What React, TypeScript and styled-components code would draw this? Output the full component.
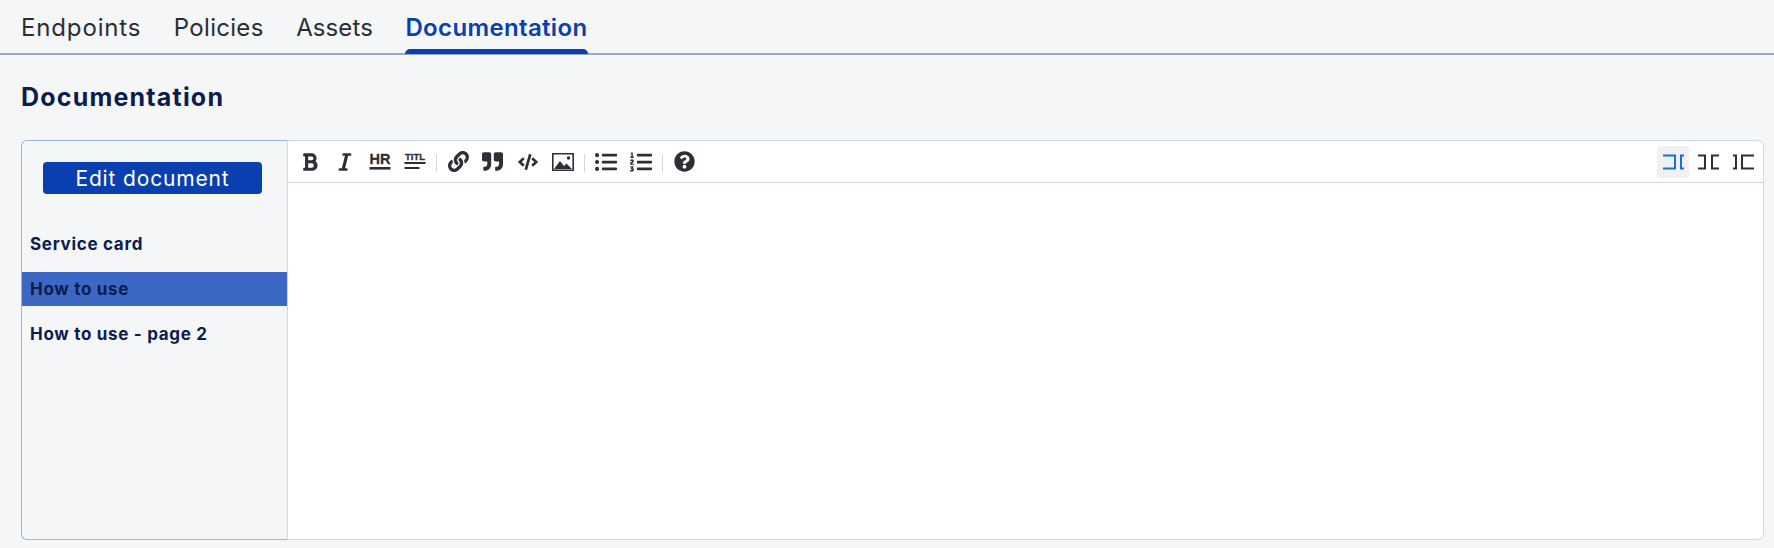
import React from "react";
import styled, { createGlobalStyle } from "styled-components";
import { FaBold, FaItalic, FaLink, FaQuoteRight, FaCode, FaListUl, FaListOl, FaQuestionCircle } from "react-icons/fa";

const Global = createGlobalStyle`
  html, body { margin: 0; padding: 0; background: #f4f6f8; }
  body { font-family: "Inter", "Liberation Sans", sans-serif; width: 1774px; height: 548px; overflow: hidden; }
`;
const Page = styled.div`display: flex; flex-direction: column; height: 548px;`;
const Tabs = styled.nav`
  display: flex; gap: 32.5px; height: 53px; padding-left: 21px;
  border-bottom: 2px solid #9ea7bf;
`;
const Tab = styled.div<{ $active?: boolean; $track: number }>`
  position: relative; font-size: 24px; line-height: 55px;
  letter-spacing: ${p => p.$track}px;
  font-weight: ${p => (p.$active ? 600 : 400)};
  color: ${p => (p.$active ? "#0a3fb0" : "#2b2d33")};
  ${p => p.$active && `&::after { content: ""; position: absolute; left: 0; right: 0; bottom: -1px; height: 5px; background: #0a3fb0; border-radius: 5px 5px 0 0; }`}
`;
const Main = styled.main`flex: 1; display: flex; flex-direction: column; padding: 0 10px 8px 21px;`;
const Heading = styled.h1`
  margin: 24px 0 25px; font-size: 25px; line-height: 36px; font-weight: 700; color: #0b1c4d; letter-spacing: 1.2px;
`;
const Card = styled.section`display: flex; height: 400px; box-sizing: border-box;`;
const Side = styled.aside`
  width: 266px; box-sizing: border-box; border: 1px solid #9cb4e4; border-right: 0; border-radius: 6px 0 0 6px;
  display: flex; flex-direction: column;
`;
const EditBtn = styled.button`
  width: 219px; height: 32px; margin: 21px 0 33px 21px; border: 0; border-radius: 4px; background: #0a3fb0; color: #fff;
  font: 400 21px "Inter", sans-serif; letter-spacing: 0.85px; padding: 0;
`;
const Item = styled.div<{ $active?: boolean }>`
  height: 34px; margin-bottom: 11px; padding-left: 8px; line-height: 34px; font-size: 17px; font-weight: 700; letter-spacing: 0.7px; color: #0b1c4d;
  background: ${p => (p.$active ? "#3c67c4" : "transparent")};
`;
const Editor = styled.div`
  flex: 1; background: #fff; border: 1px solid #ced8e6; border-radius: 0 6px 6px 0; display: flex; flex-direction: column;
`;
const Toolbar = styled.div`
  height: 42px; box-sizing: border-box; border-bottom: 1px solid #ced8e6; display: flex; align-items: center; padding: 0 1px 0 6px; color: #2c3036;
`;
const Tool = styled.span<{ $active?: boolean }>`
  width: 32px; height: 32px; margin-right: 2.9px; display: flex; align-items: center; justify-content: center; border-radius: 3px; flex: none;
  background: ${p => (p.$active ? "#eff1f4" : "transparent")};
  color: ${p => (p.$active ? "#1a6fdc" : "inherit")};
  svg { display: block; overflow: visible; }
`;
const Sep = styled.i`width: 1px; height: 18px; background: #d2d8e0; margin: 3px 5.5px 0 2px; flex: none;`;
const Spacer = styled.div`flex: 1;`;

const Split = ({ variant }: { variant: number }) => (
  <svg width="21" height="16" viewBox="0 0 21 16" fill="none" stroke="currentColor" strokeWidth="2">
    {variant === 0 && <><path d="M0 1.5h12v13H0" /><path d="M21 1.5h-3v13h3" /></>}
    {variant === 1 && <><path d="M0 1.5h7v13H0" /><path d="M21 1.5h-7v13h7" /></>}
    {variant === 2 && <><path d="M0 1.5h3v13H0" /><path d="M21 1.5H9v13h12" /></>}
  </svg>
);

const LabelIcon = ({ label, lines, size }: { label: string; lines: number; size: number }) => (
  <svg width="24" height="20" viewBox="-1 0 24 20">
    <text x="11" y={lines === 1 ? 12 : 7.5} textAnchor="middle" fontFamily="Liberation Sans, sans-serif" fontWeight="700" fontSize={size} fill="#2c3036" stroke="#2c3036" strokeWidth="0.3">{label}</text>
    {lines === 1 ? (
      <rect x="0.5" y="15" width="21" height="2.6" fill="#2c3036" />
    ) : (
      <>
        <rect x="0.5" y="10" width="21" height="2" fill="#2c3036" />
        <rect x="0.5" y="15" width="15" height="2" fill="#2c3036" />
      </>
    )}
  </svg>
);

const Picture = () => (
  <svg width="22" height="18" viewBox="0 0 22 18">
    <path fillRule="evenodd" fill="currentColor" d="M0 0h22v18H0zM1.6 1.6v14.8h18.8V1.6z" />
    <circle cx="16.5" cy="5" r="1.7" fill="currentColor" />
    <path fill="currentColor" d="M2 16l6-8 4 5 2.5-2.5L20 16z" />
  </svg>
);

export default function App() {
  return (
    <Page>
      <Global />
      <Tabs>
        <Tab $track={0.85}>Endpoints</Tab>
        <Tab $track={0.3}>Policies</Tab>
        <Tab $track={0.1}>Assets</Tab>
        <Tab $active $track={0.35}>Documentation</Tab>
      </Tabs>
      <Main>
        <Heading>Documentation</Heading>
        <Card>
          <Side>
            <EditBtn>Edit document</EditBtn>
            <Item>Service card</Item>
            <Item $active>How to use</Item>
            <Item>How to use - page 2</Item>
          </Side>
          <Editor>
            <Toolbar>
              <Tool><FaBold size={20} /></Tool>
              <Tool><FaItalic size={20} /></Tool>
              <Tool><LabelIcon label="HR" lines={1} size={14.5} /></Tool>
              <Tool><LabelIcon label="TITL" lines={2} size={9.5} /></Tool>
              <Sep />
              <Tool><FaLink size={21} /></Tool>
              <Tool><FaQuoteRight size={21} /></Tool>
              <Tool><FaCode size={20} /></Tool>
              <Tool><Picture /></Tool>
              <Sep />
              <Tool><FaListUl size={22} /></Tool>
              <Tool><FaListOl size={22} /></Tool>
              <Sep />
              <Tool><FaQuestionCircle size={21} /></Tool>
              <Spacer />
              <Tool $active><Split variant={0} /></Tool>
              <Tool><Split variant={1} /></Tool>
              <Tool><Split variant={2} /></Tool>
            </Toolbar>
          </Editor>
        </Card>
      </Main>
    </Page>
  );
}
